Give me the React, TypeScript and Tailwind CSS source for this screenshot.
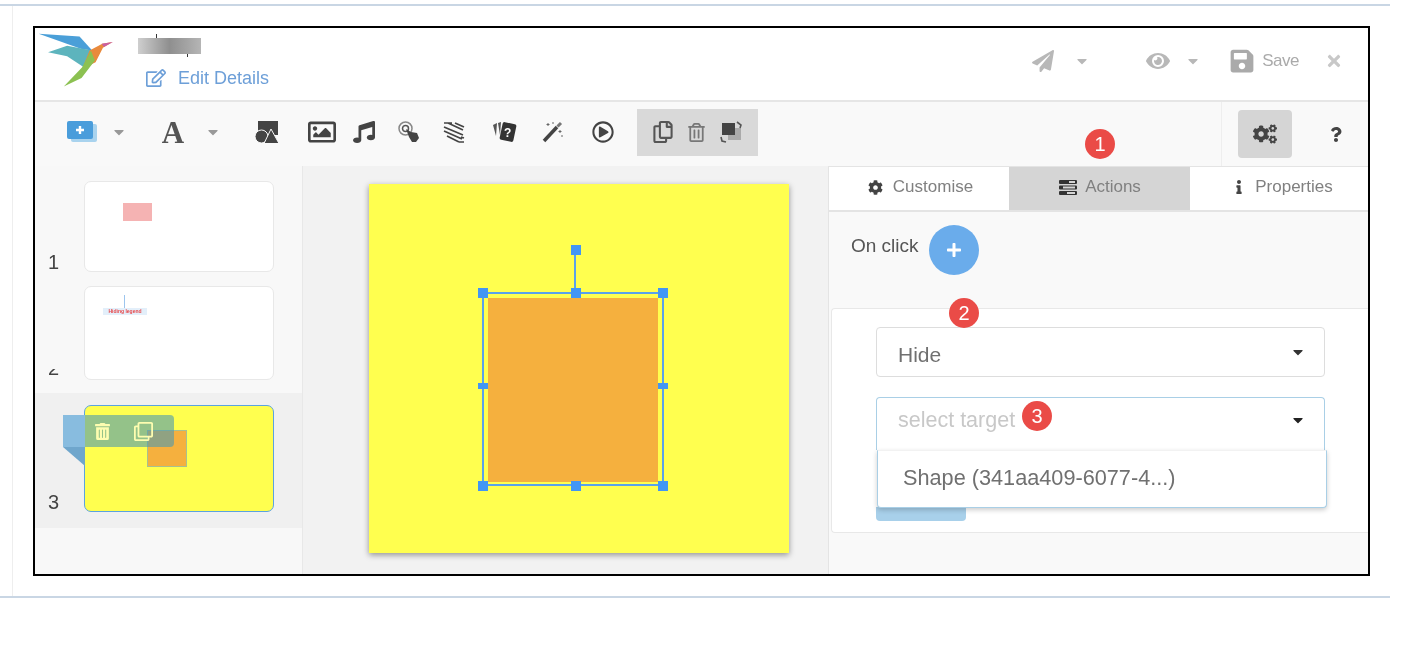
import { ReactNode } from 'react';
import {
  FaCaretDown,
  FaCog,
  FaEye,
  FaCogs,
  FaInfo,
  FaMusic,
  FaPaperPlane,
  FaPlus,
  FaQuestion,
  FaRegClone,
  FaRegCopy,
  FaRegEdit,
  FaRegImage,
  FaRegPlayCircle,
  FaRegTrashAlt,
  FaSave,
  FaTimes,
  FaTrashAlt,
} from 'react-icons/fa';

const Logo = () => (
  <svg viewBox="105 95 230 170" className="w-[77px] h-[57px]">
    <polygon points="110,100 232,108 270,150 238,146" fill="#4a9fd8" />
    <polygon points="138,155 195,136 270,150 245,200 195,167" fill="#5db4bd" />
    <polygon points="262,150 300,130 330,125 302,142 280,185 240,205" fill="#e98a3c" />
    <polygon points="298,130 332,125 305,140" fill="#c95fa0" />
    <polygon points="266,150 240,200 185,258 238,232 278,180" fill="#8cc152" />
  </svg>
);

const AddSlideIcon = () => (
  <svg viewBox="0 0 30 24" className="w-[30px] h-[24px]">
    <rect x="4" y="4" width="26" height="18" rx="2" fill="#a9d3ee" />
    <rect x="0" y="1" width="26" height="18" rx="2" fill="#4a9ddb" />
    <path d="M13 6v8M9 10h8" stroke="#fff" strokeWidth="2.4" />
  </svg>
);

const ShapesIcon = () => (
  <svg viewBox="0 0 24 24" className="w-[24px] h-[24px]" fill="#444">
    <rect x="3" y="1" width="20" height="14" />
    <circle cx="6.500" cy="16.500" r="6.500" stroke="#f9f9f9" strokeWidth="1" />
    <polygon points="16,9 24,23.500 9,23.500" stroke="#f9f9f9" strokeWidth="1" />
  </svg>
);

const PointerIcon = () => (
  <svg viewBox="0 0 22 22" className="w-[22px] h-[22px]" fill="none" stroke="#555">
    <circle cx="7.500" cy="7.500" r="6.500" strokeWidth="1.500" stroke="#888" />
    <circle cx="7.500" cy="7.500" r="3" strokeWidth="1.500" />
    <path d="M8 8l5 3 6 1 2 5-3 4h-4l-3-5z" fill="#444" stroke="none" />
  </svg>
);

const HatchIcon = () => (
  <svg viewBox="0 0 22 22" className="w-[22px] h-[22px]" stroke="#444" strokeWidth="1.700" fill="none">
    <path d="M1 2h8M5 2l15 7M1 6l19 8M1 10l18 8M4 15l12 6M12 2l9 4M16 21h5M18 16l3 1" />
  </svg>
);

const CardsIcon = () => (
  <svg viewBox="0 0 26 22" className="w-[26px] h-[22px]">
    <path d="M5 2l-4 2 3 11zM9 1L6 2l2 12z" fill="#555" />
    <rect x="9" y="2" width="14" height="18" rx="2" transform="rotate(12 16 11)" fill="#333" />
    <text x="12" y="16" fontSize="12" fontWeight="700" fill="#fff" fontFamily="Liberation Sans, sans-serif">?</text>
  </svg>
);

const WandIcon = () => (
  <svg viewBox="0 0 22 22" className="w-[22px] h-[22px]">
    <path d="M2 20L15 6" stroke="#444" strokeWidth="3.500" />
    <path d="M15.500 5.500L19 2" stroke="#777" strokeWidth="3" />
    <path d="M6 2v3M4.500 3.500h3M11 1v2M18 9v3M16.500 10.500h3M20 14v2" stroke="#666" strokeWidth="1" />
  </svg>
);

const SwapIcon = () => (
  <svg viewBox="0 0 24 22" className="w-[24px] h-[22px]">
    <rect x="9" y="7" width="13" height="12" fill="#aaa" />
    <rect x="3" y="2" width="13" height="12" fill="#444" />
    <path d="M18 1l4 3-1 3M2 16l1 4 4 1" stroke="#555" strokeWidth="1.600" fill="none" />
  </svg>
);

const TasksIcon = () => (
  <svg viewBox="0 0 18 15" className="w-[18px] h-[15px]" fill="#333">
    <rect x="0" y="0" width="18" height="4" rx="1" />
    <rect x="0" y="5.500" width="18" height="4" rx="1" />
    <rect x="0" y="11" width="18" height="4" rx="1" />
    <rect x="10" y="1" width="6" height="2" fill="#d5d5d5" />
    <rect x="4" y="6.500" width="12" height="2" fill="#d5d5d5" />
    <rect x="8" y="12" width="8" height="2" fill="#d5d5d5" />
  </svg>
);

const Caret = ({ className }: { className: string }) => (
  <FaCaretDown className={`w-[16px] h-[16px] ${className}`} />
);

const Badge = ({ n, className }: { n: number; className: string }) => (
  <div
    className={`absolute w-[30px] h-[30px] rounded-full bg-[#ea4b47] text-white text-[20px] flex items-center justify-center ${className}`}
  >
    {n}
  </div>
);

const Handle = ({ className }: { className: string }) => (
  <div className={`absolute w-[10px] bg-[#4296f4] ${className}`} />
);

const Toolbar = () => (
  <div className="relative flex items-center h-[66px] pl-[32px] pb-[4px] bg-[#f9f9f9] border-t-2 border-[#e6e6e6]">
    <AddSlideIcon />
    <Caret className="ml-[14px] text-[#999]" />
    <span className="ml-[34px] w-[24px] text-center text-[31px] font-bold leading-none text-[#555] font-['Liberation_Serif',serif]">
      A
    </span>
    <Caret className="ml-[20px] text-[#999]" />
    <div className="ml-[34px]">
      <ShapesIcon />
    </div>
    <FaRegImage className="ml-[29px] w-[28px] h-[28px] text-[#444]" />
    <FaMusic className="ml-[17px] w-[22px] h-[22px] text-[#444]" />
    <div className="ml-[23px]">
      <PointerIcon />
    </div>
    <div className="ml-[23px]">
      <HatchIcon />
    </div>
    <div className="ml-[27px]">
      <CardsIcon />
    </div>
    <div className="ml-[24px]">
      <WandIcon />
    </div>
    <FaRegPlayCircle className="ml-[28px] w-[22px] h-[22px] text-[#444]" />
    <div className="ml-[23px] w-[121px] h-[47px] bg-[#d9d9d9] flex items-center pl-[15px] gap-[13px]">
      <FaRegCopy className="w-[22px] h-[22px] text-[#555]" />
      <FaRegTrashAlt className="w-[19px] h-[19px] text-[#777]" />
      <SwapIcon />
    </div>
    <div className="ml-auto self-stretch -mb-[4px] flex items-center border-l border-[#eeeeee] pl-[16px] w-[147px]">
      <div className="w-[54px] h-[48px] rounded bg-[#d5d5d5] flex items-center justify-center">
        <FaCogs className="w-[24px] h-[24px] text-[#444]" />
      </div>
      <FaQuestion className="ml-[37px] w-[14px] h-[15px] text-[#444]" />
    </div>
    <Badge n={1} className="left-[1050px] top-[27px]" />
  </div>
);

const Header = () => (
  <div className="flex h-[72px] bg-white">
    <div className="pl-[2px] pt-[4px]">
      <Logo />
    </div>
    <div className="ml-[24px] pt-[10px]">
      <div className="relative w-[63px] h-[16px] bg-gradient-to-r from-[#cfcfcf] via-[#8f8f8f] to-[#b5b5b5]">
        <div className="absolute left-[18px] top-[-4px] w-px h-[4px] bg-[#333]" />
        <div className="absolute left-[49px] top-[16px] w-px h-[3px] bg-[#333]" />
      </div>
      <div className="ml-[8px] mt-[12px] flex items-center gap-[12px] text-[18px] leading-[24px] text-[#6d9fd8]">
        <FaRegEdit className="w-[20px] h-[18px]" />
        <span>Edit Details</span>
      </div>
    </div>
    <div className="ml-auto flex items-center h-[66px] text-[#b8b8b8]">
      <FaPaperPlane className="w-[22px] h-[22px]" />
      <Caret className="ml-[20px]" />
      <FaEye className="ml-[56px] w-[24px] h-[22px]" />
      <Caret className="ml-[15px]" />
      <FaSave className="ml-[29px] w-[24px] h-[26px] text-[#aaaaaa]" />
      <span className="ml-[8px] text-[17px] text-[#aaaaaa] tracking-[-0.5px]">Save</span>
      <FaTimes className="ml-[27px] w-[16px] h-[18px] text-[#c8c8c8]" />
      <div className="w-[26px]" />
    </div>
  </div>
);

const Slide = ({
  label,
  numberClass,
  className,
  thumbClass,
  children,
}: {
  label: string;
  numberClass?: string;
  className: string;
  thumbClass: string;
  children: ReactNode;
}) => (
  <div className={`flex items-end pl-[13px] ${className}`}>
    <div className={`w-[36px] overflow-hidden flex items-end text-[20px] leading-none text-[#444] ${numberClass ?? ''}`}>
      {label}
    </div>
    <div className={`relative w-[190px] rounded-[7px] border ${thumbClass}`}>{children}</div>
  </div>
);

const Sidebar = () => (
  <div className="w-[268px] shrink-0 bg-[#f8f8f8] border-r border-[#e8e8e8] pt-[15px]">
    <Slide label="1" className="" thumbClass="h-[91px] bg-white border-[#e8e8e8]">
      <div className="ml-[38px] mt-[21px] w-[29px] h-[18px] bg-[#f5b3b3]" />
    </Slide>
    <Slide label="2" numberClass="h-[9px] mb-[2px]" className="mt-[14px]" thumbClass="h-[94px] bg-white border-[#e8e8e8]">
      <div className="ml-[39px] mt-[8px] w-px h-[13px] bg-[#9cc5ee]" />
      <div className="ml-[18px] w-[44px] bg-[#e3effa] text-[5px] leading-[7px] text-[#e8484a] whitespace-nowrap text-center font-bold">
        Hiding legend
      </div>
    </Slide>
    <Slide label="3" className="mt-[13px] pt-[12px] pb-[16px] bg-[#f0f0f0]" thumbClass="h-[107px] bg-[#ffff4f] border-[#5ba3e0]">
      <div className="absolute left-[63px] top-[25px] w-[38px] h-[35px] bg-[#f5b03e] outline outline-1 outline-[#a8c090]" />
      <div className="absolute left-[-22px] top-[9px] w-[22px] h-[32px] bg-[#88bcdf]" />
      <div className="absolute left-[-22px] top-[41px] border-t-[19px] border-l-[22px] border-t-[#6fa6cc] border-l-transparent" />
      <div className="absolute left-0 top-[9px] w-[89px] h-[32px] rounded-r-[4px] bg-[#4c9ab0]/60 flex items-center pl-[10px] gap-[24px] text-[#fdfdb0]">
        <FaTrashAlt className="w-[15px] h-[17px]" />
        <FaRegClone className="w-[19px] h-[19px]" />
      </div>
    </Slide>
  </div>
);

const Canvas = () => (
  <div className="flex-1 bg-[#f2f2f2] border-r border-[#e4e4e4] pt-[18px] pl-[66px]">
    <div className="relative w-[420px] h-[369px] bg-[#ffff4f] shadow-[0_2px_6px_rgba(0,0,0,0.4)]">
      <div className="absolute left-[119px] top-[114px] w-[170px] h-[184px] bg-[#f5b03e]" />
      <div className="absolute left-[113px] top-[108px] w-[182px] h-[194px] border-2 border-[#5aa2ea]" />
      <div className="absolute left-[205px] top-[69px] w-[2px] h-[40px] bg-[#5aa2ea]" />
      <Handle className="left-[202px] top-[61px] h-[10px]" />
      <Handle className="left-[109px] top-[104px] h-[10px]" />
      <Handle className="left-[202px] top-[104px] h-[10px]" />
      <Handle className="left-[289px] top-[104px] h-[10px]" />
      <Handle className="left-[109px] top-[199px] h-[6px]" />
      <Handle className="left-[289px] top-[199px] h-[6px]" />
      <Handle className="left-[109px] top-[297px] h-[10px]" />
      <Handle className="left-[202px] top-[297px] h-[10px]" />
      <Handle className="left-[289px] top-[297px] h-[10px]" />
    </div>
  </div>
);

const Tab = ({ active, className, children }: { active?: boolean; className: string; children: ReactNode }) => (
  <div
    className={`flex items-center justify-center pb-[3px] text-[17px] text-[#808080] ${className} ${
      active ? 'bg-[#d5d5d5]' : 'bg-white'
    }`}
  >
    {children}
  </div>
);

const RightPanel = () => (
  <div className="w-[539px] shrink-0 bg-[#f9f9f9]">
    <div className="flex h-[46px] border-b-2 border-t border-[#e4e4e4]">
      <Tab className="w-[180px] gap-[10px] pl-[3px]">
        <FaCog className="w-[15px] h-[15px] text-[#444]" />
        Customise
      </Tab>
      <Tab active className="w-[181px] gap-[8px] pl-[1px]">
        <TasksIcon />
        Actions
      </Tab>
      <Tab className="flex-1 gap-[10px] pl-[8px]">
        <FaInfo className="w-[12px] h-[14px] text-[#444]" />
        Properties
      </Tab>
    </div>
    <div className="flex items-start pl-[22px] pt-[13px] h-[96px]">
      <span className="mt-[8px] text-[19px] leading-[26px] text-[#555]">On click</span>
      <div className="ml-[10px] w-[50px] h-[50px] rounded-full bg-[#6aaceb] flex items-center justify-center">
        <FaPlus className="w-[16px] h-[16px] text-white" />
      </div>
    </div>
    <div className="relative ml-[2px] h-[225px] bg-white border border-r-0 border-[#e8e8e8] rounded-l-[4px] pl-[44px] pt-[18px]">
      <Badge n={2} className="left-[117px] top-[-11px]" />
      <div className="w-[449px] h-[50px] rounded-[4px] border border-[#dddddd] flex items-center justify-between pl-[21px] pr-[18px] text-[21px] text-[#707070]">
        <span className="pt-[6px]">Hide</span>
        <FaCaretDown className="w-[16px] h-[16px] text-[#333]" />
      </div>
      <div className="mt-[20px] w-[449px] h-[53px] rounded-t-[4px] border border-b-0 border-[#a9cfe6] flex items-center justify-between pl-[21px] pr-[18px] pb-[8px] text-[21.500px] text-[#c8c8c8]">
        select target
        <FaCaretDown className="w-[16px] h-[16px] text-[#222]" />
      </div>
      <div className="relative z-10 w-[450px] ml-[1px] h-[58px] bg-white rounded-b-[4px] border border-t-[#f2f2f2] border-[#a9cfe6] shadow-[0_2px_5px_rgba(0,0,0,0.2)] flex items-center pl-[25px] pb-[2px] text-[21.700px] text-[#707070]">
        Shape (341aa409-6077-4...)
      </div>
      <div className="w-[90px] h-[14px] -mt-px bg-[#a8d0ea] rounded-b-[4px]" />
      <Badge n={3} className="left-[190px] top-[92px]" />
    </div>
  </div>
);

export default function App() {
  return (
    <div className="w-[1428px] h-[654px] bg-white font-['Liberation_Sans',sans-serif]">
      <div className="pt-[4px] w-[1390px]">
        <div className="h-[594px] border-y-2 border-[#c9d6e4] pl-[12px]">
          <div className="h-full border-l border-[#eeeeee] pl-[20px] pt-[20px]">
            <div className="w-[1337px] h-[550px] border-2 border-black flex flex-col overflow-hidden">
              <div className="flex flex-col h-full blur-[0.5px]">
                <Header />
                <Toolbar />
                <div className="flex flex-1 min-h-0">
                  <Sidebar />
                  <Canvas />
                  <RightPanel />
                </div>
              </div>
            </div>
          </div>
        </div>
      </div>
    </div>
  );
}
